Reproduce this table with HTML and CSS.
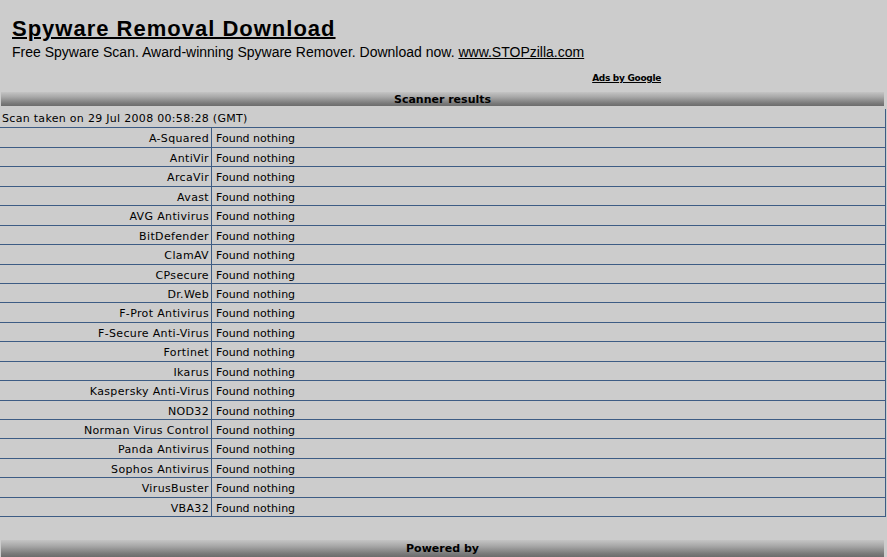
FILE: index.html
```html
<!DOCTYPE html>
<html>
<head>
<meta charset="utf-8">
<link rel="stylesheet" href="styles.css">
</head>
<body>
<div class="ad">
  <a class="ad-title" href="#">Spyware Removal Download</a>
  <div class="ad-text">Free Spyware Scan. Award-winning Spyware Remover. Download now. <a href="#">www.STOPzilla.com</a></div>
  <div class="ad-by"><a href="#">Ads by Google</a></div>
</div>
<div class="bar">Scanner results</div>
<div class="results">
  <div class="scan-row">Scan taken on 29 Jul 2008 00:58:28 (GMT)</div>
  <div class="row"><div class="name">A-Squared</div><div class="res">Found nothing</div></div>
  <div class="row"><div class="name">AntiVir</div><div class="res">Found nothing</div></div>
  <div class="row"><div class="name">ArcaVir</div><div class="res">Found nothing</div></div>
  <div class="row"><div class="name">Avast</div><div class="res">Found nothing</div></div>
  <div class="row"><div class="name">AVG Antivirus</div><div class="res">Found nothing</div></div>
  <div class="row"><div class="name">BitDefender</div><div class="res">Found nothing</div></div>
  <div class="row"><div class="name">ClamAV</div><div class="res">Found nothing</div></div>
  <div class="row"><div class="name">CPsecure</div><div class="res">Found nothing</div></div>
  <div class="row"><div class="name">Dr.Web</div><div class="res">Found nothing</div></div>
  <div class="row"><div class="name">F-Prot Antivirus</div><div class="res">Found nothing</div></div>
  <div class="row"><div class="name">F-Secure Anti-Virus</div><div class="res">Found nothing</div></div>
  <div class="row"><div class="name">Fortinet</div><div class="res">Found nothing</div></div>
  <div class="row"><div class="name">Ikarus</div><div class="res">Found nothing</div></div>
  <div class="row"><div class="name">Kaspersky Anti-Virus</div><div class="res">Found nothing</div></div>
  <div class="row"><div class="name">NOD32</div><div class="res">Found nothing</div></div>
  <div class="row"><div class="name">Norman Virus Control</div><div class="res">Found nothing</div></div>
  <div class="row"><div class="name">Panda Antivirus</div><div class="res">Found nothing</div></div>
  <div class="row"><div class="name">Sophos Antivirus</div><div class="res">Found nothing</div></div>
  <div class="row"><div class="name">VirusBuster</div><div class="res">Found nothing</div></div>
  <div class="row"><div class="name">VBA32</div><div class="res">Found nothing</div></div>
</div>
<div class="bar bar-bottom">Powered by</div>
</body>
</html>
```
FILE: styles.css
```css
html, body {
  margin: 0;
  padding: 0;
  background: #cccccc;
  overflow: hidden;
}
body {
  font-family: "DejaVu Sans", Verdana, sans-serif;
  font-size: 11px;
  color: #000;
}
a { color: #000; }
.ad {
  padding: 16px 0 0 12px;
  height: 78px;
  box-sizing: border-box;
  font-family: "Liberation Sans", Arial, sans-serif;
}
.ad-title {
  display: inline-block;
  font-size: 22px;
  letter-spacing: 1px;
  font-weight: bold;
  line-height: 26px;
  text-decoration-thickness: 2px;
}
.ad-text {
  margin-top: 2px;
  font-size: 14px;
  line-height: 16px;
}
.ad-by {
  width: 649px;
  text-align: right;
  margin-top: 12px;
  font-family: "DejaVu Sans", Verdana, sans-serif;
  font-size: 9px;
  letter-spacing: -0.3px;
  font-weight: bold;
  line-height: 12px;
}
.bar {
  margin: 14px 3px 0 1px;
  height: 14px;
  line-height: 15px;
  background: linear-gradient(#c4c4c4, #a8a8a8 35%, #7a7a7a 80%, #6c6c6c);
  text-align: center;
  font-weight: bold;
  font-size: 11px;
}
.results {
  margin-top: 3px;
  width: 886px;
}
.scan-row, .row {
  height: 18.45px;
  line-height: 21px;
  border-bottom: 1px solid #3d5c84;
  border-right: 1px solid #3d5c84;
  white-space: nowrap;
}
.scan-row {
  padding-left: 2px;
  line-height: 20px;
  letter-spacing: 0.3px;
}
.row {
  display: flex;
}
.name {
  width: 209px;
  text-align: right;
  padding-right: 2px;
  letter-spacing: 0.35px;
  border-right: 1px solid #3d5c84;
}
.res {
  padding-left: 4px;
}
.bar-bottom {
  margin-top: 23px;
  height: 17px;
  line-height: 17px;
}
```
